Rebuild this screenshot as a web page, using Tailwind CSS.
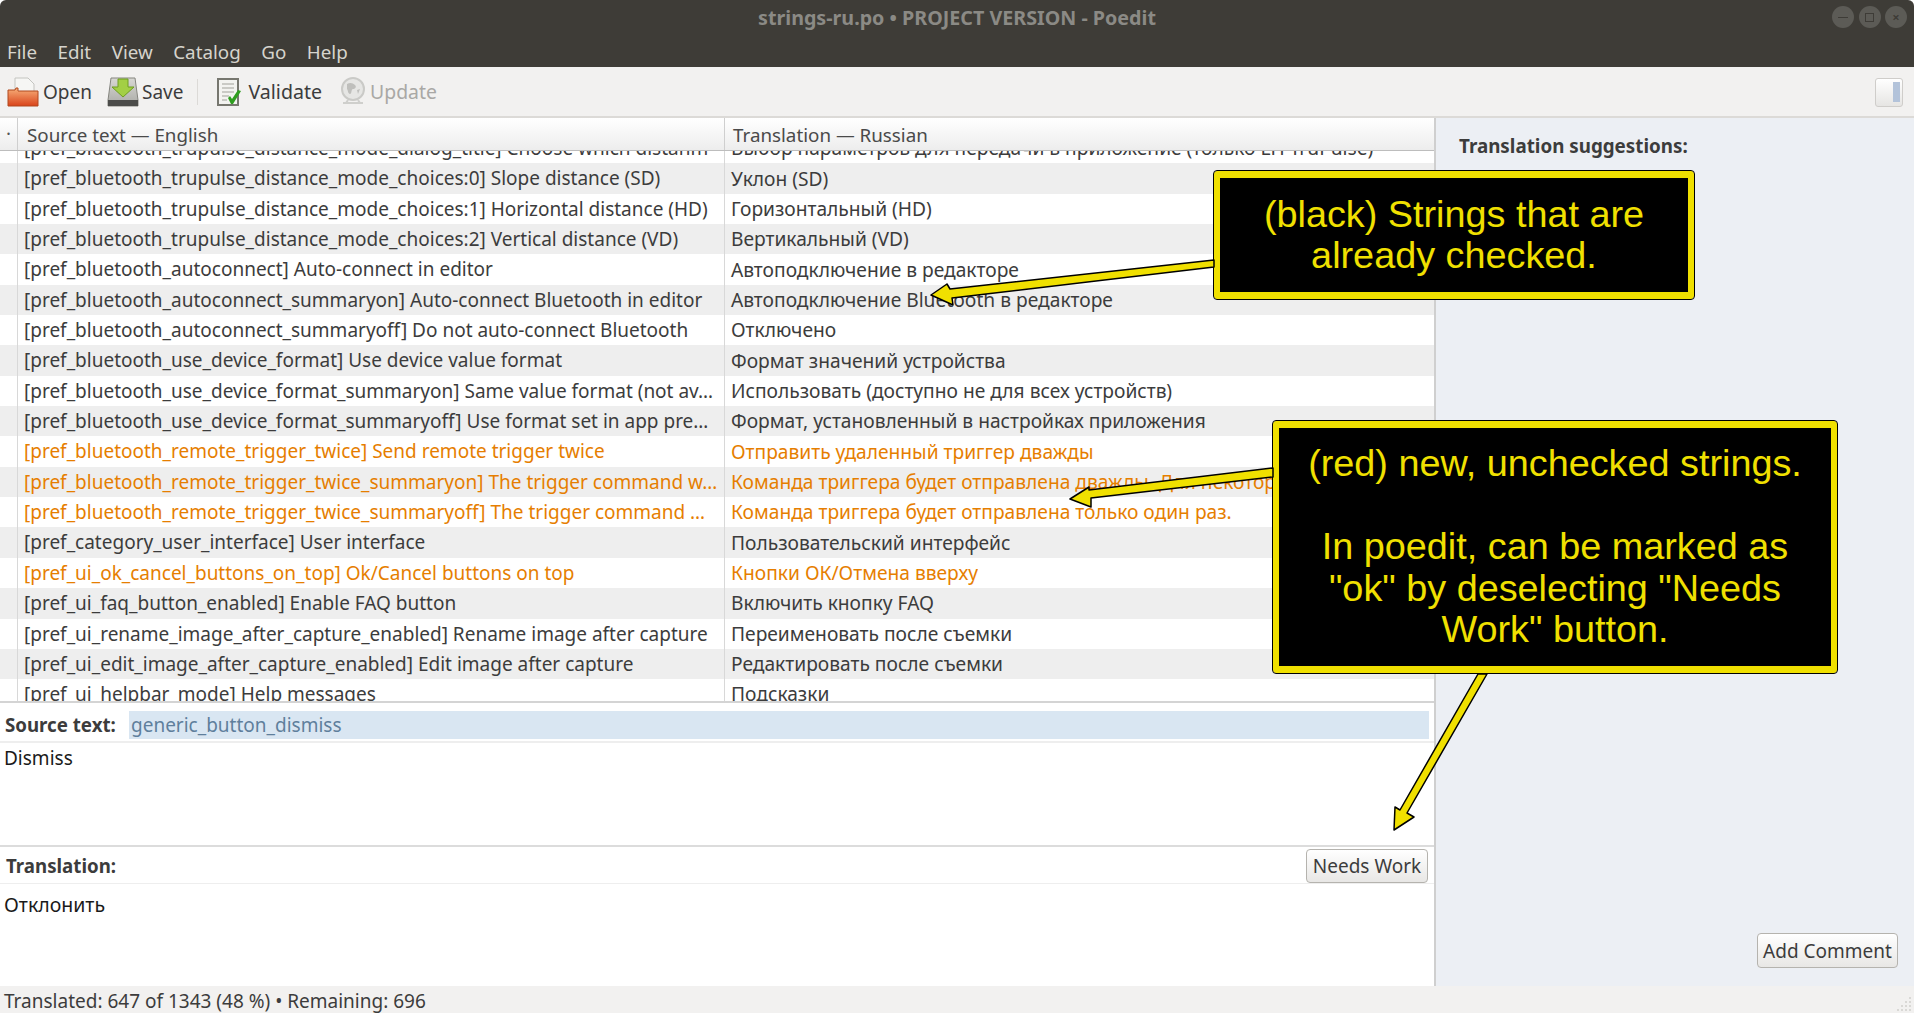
<!DOCTYPE html>
<html lang="en">
<head>
<meta charset="UTF-8">
<title>strings-ru.po - Poedit</title>
<script src="https://cdn.jsdelivr.net/npm/@tailwindcss/browser@4"></script>
</head>
<body class="bg-white overflow-hidden font-['Noto_Sans',sans-serif] text-[#3c3c3c]">
<div class="relative w-[1920px] h-[1013px] overflow-hidden">
  <div class="flex flex-col w-[1914px] h-[1013px]">
    <!-- Title bar and menu -->
    <header class="h-[67px] bg-[#3e3c37] rounded-t-md shrink-0 flex flex-col">
      <div class="relative h-[36px] flex items-center justify-center text-[19.7px] font-bold text-[#8b8a85]">
        <span>strings-ru.po • PROJECT VERSION - Poedit</span>
        <div class="absolute right-[7px] top-[6px] flex gap-[4.5px]">
          <div class="w-[22px] h-[22px] rounded-full bg-[#5c5b56] flex items-center justify-center"><div class="w-[10px] h-[1px] bg-[#3e3c37]"></div></div>
          <div class="w-[22px] h-[22px] rounded-full bg-[#5c5b56] flex items-center justify-center"><div class="w-[9px] h-[9px] border border-[#3e3c37]"></div></div>
          <div class="w-[22px] h-[22px] rounded-full bg-[#5c5b56] flex items-center justify-center text-[#3e3c37] text-[13px] leading-none">×</div>
        </div>
      </div>
      <nav class="flex gap-[20.5px] pl-[7px] pt-[1px] text-[18.8px] text-[#d6d4cd] leading-[30px]">
        <span>File</span><span>Edit</span><span>View</span><span>Catalog</span><span>Go</span><span>Help</span>
      </nav>
    </header>

    <!-- Toolbar -->
    <div class="h-[51px] shrink-0 bg-[#f2f1f0] border-b-2 border-[#dcdad7] flex items-center pl-[7px] pr-[11px] pt-[1px] text-[19px]">
      <div class="flex items-center gap-[4px]">
        <svg width="32" height="30" viewBox="0 0 32 30">
          <defs><linearGradient id="folder" x1="0" y1="0" x2="0" y2="1"><stop offset="0" stop-color="#f7b07a"/><stop offset="1" stop-color="#d9431a"/></linearGradient></defs>
          <path d="M8 1h13l6 6v10H8z" fill="#f6f6f4" stroke="#c4c4c0"/>
          <path d="M1 13h7l1-2h2v3h20v15H1z" fill="url(#folder)" stroke="#b0481f"/>
        </svg>
        <span>Open</span>
      </div>
      <div class="flex items-center gap-[3px] ml-[15px]">
        <svg width="32" height="30" viewBox="0 0 32 30">
          <defs><linearGradient id="drive" x1="0" y1="0" x2="0" y2="1"><stop offset="0" stop-color="#d8d8d4"/><stop offset="1" stop-color="#a9a9a5"/></linearGradient></defs>
          <path d="M4 1h24l3 22v6H1v-6z" fill="url(#drive)" stroke="#85857f"/>
          <path d="M1 23h30v6H1z" fill="#4c4c4a"/>
          <path d="M11 2h10v8h6L16 20 5 10h6z" fill="#a3cf45" stroke="#6f9e20"/>
        </svg>
        <span>Save</span>
      </div>
      <div class="w-px h-[26px] bg-[#dcdad7] ml-[14px] mr-[19px]"></div>
      <div class="flex items-center gap-[6px]">
        <svg width="25" height="28" viewBox="0 0 25 28">
          <path d="M1 1h20v26H1z" fill="#f3f3f0" stroke="#77776f" stroke-width="2"/>
          <path d="M5 6h12M5 10h12M5 14h12M5 18h7M5 22h5" stroke="#bdbdb6" stroke-width="1.5"/>
          <path d="M11 20l3 6h2l8-13-3-1-6 9-2-3z" fill="#2f9e1f"/>
        </svg>
        <span class="text-[19.6px]">Validate</span>
      </div>
      <div class="flex items-center gap-[4px] ml-[17px] text-[#a9a8a5]">
        <svg width="27" height="29" viewBox="0 0 27 29">
          <circle cx="14" cy="12" r="11" fill="#e6e6e4" stroke="#cacac7" stroke-width="2"/>
          <path d="M8 7c3-2 6-1 8 1s0 4-2 4-1 5-3 5-2-4-3-5zM18 13l3-1-2 5z" fill="#bfbfbc"/>
          <path d="M4 26h20M9 23l-2 3M19 23l2 3" stroke="#cfcfcc" stroke-width="2"/>
        </svg>
        <span class="text-[19.4px]">Update</span>
      </div>
      <div class="ml-auto w-[28px] h-[29px] rounded-[3px] border border-[#cfcdca] bg-gradient-to-b from-white to-[#e6e5e3] flex items-center justify-end pr-[2px]"><div class="w-[7px] h-[20px] bg-[#b3c3da]"></div></div>
    </div>

    <div class="flex flex-1 min-h-0">
      <!-- Editing area -->
      <main class="w-[1436px] border-r-2 border-[#cfcfcf] flex flex-col shrink-0">
        <!-- List -->
        <section class="h-[585px] border-b-2 border-[#d4d4d4] flex flex-col shrink-0">
          <div id="list-head" class="h-[33px] shrink-0 flex items-center bg-gradient-to-b from-white to-[#ededed] border-b border-[#bdbdbd] text-[18.8px] text-[#4a4a4a]">
            <div class="w-[18px] border-r border-[#cfcfcf] h-full text-center text-[#555] leading-[30px]">·</div>
            <div class="w-[707px] border-r border-[#cfcfcf] h-full pl-[9px] pt-[2px] flex items-center">Source text — English</div>
            <div class="flex-1 pl-[8px] pt-[2px]">Translation — Russian</div>
          </div>
          <div id="rows" class="relative flex-1 overflow-hidden"></div>
        </section>

        <!-- Source text -->
        <div class="h-[40px] shrink-0 flex items-start pt-[8px] border-b-2 border-[#eeeeee] pr-[5px] pl-[5px]">
          <span class="font-bold text-[18.7px] leading-[28px] w-[124px] shrink-0">Source text:</span>
          <div class="flex-1 h-[28px] bg-[#d9e6f2] pl-[2px] text-[19px] leading-[28px] text-[#5f7f9c]">generic_button_dismiss</div>
        </div>
        <div class="h-[104px] shrink-0 border-b-2 border-[#dcdcdc] pl-[4px] pt-[1px] text-[19px] leading-[28px] text-[#1a1a1a]">Dismiss</div>

        <!-- Translation -->
        <div class="h-[37px] shrink-0 flex items-start justify-between border-b border-[#eeeeee] pl-[6px] pr-[6px]">
          <span class="font-bold text-[18.7px] leading-[28px] pt-[5px]">Translation:</span>
          <button class="w-[122px] h-[34px] mt-[2px] rounded-[4px] border border-[#b5b3ae] bg-gradient-to-b from-white to-[#e8e7e5] text-[19px]">Needs Work</button>
        </div>
        <div class="flex-1 pl-[4px] pt-[7px] text-[19.5px] leading-[28px] text-[#1a1a1a]">Отклонить</div>
      </main>

      <!-- Sidebar -->
      <aside class="flex-1 bg-[#eceff4] flex flex-col pl-[23px] pr-[16px] pt-[14px] pb-[18px]">
        <div class="font-bold text-[18.8px] leading-[28px]">Translation suggestions:</div>
        <button class="mt-auto self-end w-[141px] h-[35px] rounded-[4px] border border-[#b5b3ae] bg-gradient-to-b from-white to-[#e8e7e5] text-[19px] pt-[1px]">Add Comment</button>
      </aside>
    </div>

    <!-- Status bar -->
    <footer class="h-[27px] shrink-0 bg-[#f2f1f0] pl-[4px] text-[19px] leading-[31px]">Translated: 647 of 1343 (48 %) • Remaining: 696</footer>
  </div>

  <!-- Window resize grip -->
  <svg class="absolute left-[1897px] top-[997px]" width="15" height="15" viewBox="0 0 15 15" fill="#d9d8d5">
    <rect x="12" y="0" width="2" height="2"/><rect x="8" y="4" width="2" height="2"/><rect x="12" y="4" width="2" height="2"/><rect x="4" y="8" width="2" height="2"/><rect x="8" y="8" width="2" height="2"/><rect x="12" y="8" width="2" height="2"/><rect x="0" y="12" width="2" height="2"/><rect x="4" y="12" width="2" height="2"/><rect x="8" y="12" width="2" height="2"/><rect x="12" y="12" width="2" height="2"/>
  </svg>

  <!-- Annotations -->
  <div class="absolute left-[1214px] top-[171px] w-[480px] h-[128px] rounded-[3px] border-x-[6px] border-y-[7px] border-[#f0e000] outline outline-1 outline-black bg-black flex items-center justify-center text-center text-[#f0e000] font-['Liberation_Sans',sans-serif] text-[37.8px] leading-[41.5px]">(black) Strings that are<br>already checked.</div>
  <div class="absolute left-[1273px] top-[421px] w-[564px] h-[252px] rounded-[3px] border-x-[6px] border-y-[7px] border-[#f0e000] outline outline-1 outline-black bg-black flex items-center justify-center text-center text-[#f0e000] font-['Liberation_Sans',sans-serif] text-[37.8px] leading-[41.5px]">(red) new, unchecked strings.<br><br>In poedit, can be marked as<br>"ok" by deselecting "Needs<br>Work" button.</div>
  <svg class="absolute left-0 top-0 pointer-events-none" width="1920" height="1013" viewBox="0 0 1920 1013">
    <path d="M1214 260L950 289 947 284 931 295 953 305 952 298 1214 267Z" fill="#f0e000" stroke="#000" stroke-width="1.5" stroke-linejoin="round"/>
    <path d="M1273 468L1089 490 1089 487 1070 499 1091 507 1091 498 1273 477Z" fill="#f0e000" stroke="#000" stroke-width="1.5" stroke-linejoin="round"/>
    <path d="M1478 674L1400 810 1395 807 1394 830 1414 817 1407 813 1487 674Z" fill="#f0e000" stroke="#000" stroke-width="1.5" stroke-linejoin="round"/>
  </svg>
</div>

<script>
  // [source, translation, needs work]
  const rows = [
    ['[pref_bluetooth_trupulse_distance_mode_dialog_title] Choose which distanm', 'Выбор параметров для передачи в приложение (только LH TruPulse)', false],
    ['[pref_bluetooth_trupulse_distance_mode_choices:0] Slope distance (SD)', 'Уклон (SD)', false],
    ['[pref_bluetooth_trupulse_distance_mode_choices:1] Horizontal distance (HD)', 'Горизонтальный (HD)', false],
    ['[pref_bluetooth_trupulse_distance_mode_choices:2] Vertical distance (VD)', 'Вертикальный (VD)', false],
    ['[pref_bluetooth_autoconnect] Auto-connect in editor', 'Автоподключение в редакторе', false],
    ['[pref_bluetooth_autoconnect_summaryon] Auto-connect Bluetooth in editor', 'Автоподключение Bluetooth в редакторе', false],
    ['[pref_bluetooth_autoconnect_summaryoff] Do not auto-connect Bluetooth', 'Отключено', false],
    ['[pref_bluetooth_use_device_format] Use device value format', 'Формат значений устройства', false],
    ['[pref_bluetooth_use_device_format_summaryon] Same value format (not av…', 'Использовать (доступно не для всех устройств)', false],
    ['[pref_bluetooth_use_device_format_summaryoff] Use format set in app pre…', 'Формат, установленный в настройках приложения', false],
    ['[pref_bluetooth_remote_trigger_twice] Send remote trigger twice', 'Отправить удаленный триггер дважды', true],
    ['[pref_bluetooth_remote_trigger_twice_summaryon] The trigger command w…', 'Команда триггера будет отправлена дважды. Для некоторых устройств', true],
    ['[pref_bluetooth_remote_trigger_twice_summaryoff] The trigger command …', 'Команда триггера будет отправлена только один раз.', true],
    ['[pref_category_user_interface] User interface', 'Пользовательский интерфейс', false],
    ['[pref_ui_ok_cancel_buttons_on_top] Ok/Cancel buttons on top', 'Кнопки ОК/Отмена вверху', true],
    ['[pref_ui_faq_button_enabled] Enable FAQ button', 'Включить кнопку FAQ', false],
    ['[pref_ui_rename_image_after_capture_enabled] Rename image after capture', 'Переименовать после съемки', false],
    ['[pref_ui_edit_image_after_capture_enabled] Edit image after capture', 'Редактировать после съемки', false],
    ['[pref_ui_helpbar_mode] Help messages', 'Подсказки', false]
  ];
  const list = document.getElementById('rows');
  list.innerHTML = '<div class="mt-[-18px]">' + rows.map((r, i) => `
    <div class="h-[30.35px] flex items-center ${i % 2 ? 'bg-[#eeeeee]' : 'bg-white'} ${r[2] ? 'text-[#e67e00]' : ''}">
      <div class="w-[18px] h-full border-r border-[#d8d8d8] shrink-0"></div>
      <div class="w-[707px] h-full border-r border-[#d8d8d8] shrink-0 pl-[6px] whitespace-nowrap overflow-hidden text-[19px] leading-[30px]">${r[0]}</div>
      <div class="pl-[6px] whitespace-nowrap overflow-hidden text-[19.2px] leading-[30px]">${r[1]}</div>
    </div>`).join('') + '</div>';
</script>
</body>
</html>
